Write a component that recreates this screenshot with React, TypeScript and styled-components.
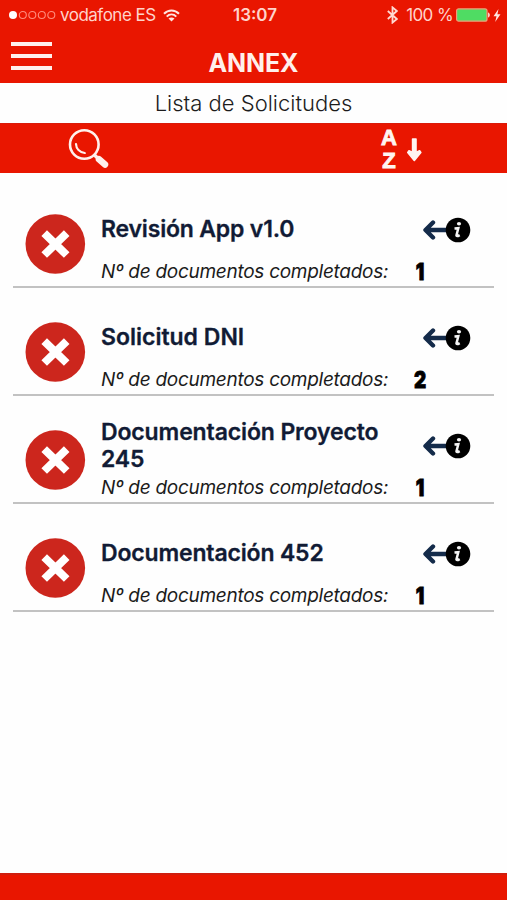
import React from "react";
import styled, { createGlobalStyle } from "styled-components";

const RED = "#e91600";

const GlobalStyle = createGlobalStyle`
  * { box-sizing: border-box; }
  body { margin: 0; background: #fff; }
  svg { display: block; flex: none; }
`;

const Screen = styled.div`
  width: 507px;
  height: 900px;
  display: flex;
  flex-direction: column;
  background: #fefefe;
  font-family: Inter, "Liberation Sans", sans-serif;
  overflow: hidden;
`;

const Header = styled.header`
  height: 83px;
  flex: none;
  background: ${RED};
`;

const StatusBar = styled.div`
  height: 30px;
  display: grid;
  grid-template-columns: 1fr auto 1fr;
  align-items: center;
  padding: 0 6px 0 9px;
  color: #ffd3ca;
`;

const StatusGroup = styled.div<{ $end?: boolean }>`
  display: flex;
  align-items: center;
  justify-content: ${(p) => (p.$end ? "flex-end" : "flex-start")};
`;

const StatusText = styled.span<{ $spacing: number; $bold?: boolean }>`
  font-size: 17px;
  line-height: 30px;
  font-weight: ${(p) => (p.$bold ? 600 : 400)};
  letter-spacing: ${(p) => p.$spacing}px;
  white-space: pre;
`;

const Carrier = styled(StatusText)`
  margin: 0 7px 0 4px;
`;

const Percent = styled(StatusText)`
  margin: 0 3px 0 8px;
`;

const NavBar = styled.div`
  height: 53px;
  display: grid;
  grid-template-columns: 60px 1fr 60px;
`;

const MenuButton = styled.button`
  border: 0;
  padding: 12px 0 0 11px;
  background: none;
  display: flex;
  flex-direction: column;
  gap: 8px;
`;

const MenuBar = styled.span`
  width: 41px;
  height: 4px;
  background: #fff0ec;
`;

const AppTitle = styled.h1`
  margin: 0;
  padding-top: 18px;
  text-align: center;
  font-size: 25px;
  line-height: 31px;
  font-weight: 700;
  letter-spacing: -0.1px;
  color: #fff0ec;
`;

const Subtitle = styled.h2`
  margin: 0;
  height: 40px;
  flex: none;
  line-height: 41px;
  text-align: center;
  font-size: 22px;
  font-weight: 300;
  color: #1c1c1c;
`;

const Toolbar = styled.div`
  height: 50px;
  flex: none;
  display: flex;
  justify-content: space-between;
  padding: 0 85px 0 67px;
  background: ${RED};
  border-top: 1px solid #d91b0a;
`;

const ToolButton = styled.button`
  border: 0;
  padding: 0 0 2px;
  background: none;
  display: flex;
  align-items: center;
  gap: 9px;
`;

const SortLetters = styled.span`
  display: flex;
  flex-direction: column;
  align-items: center;
  width: 18px;
  padding-top: 2px;
  font: 700 22px/23px "Liberation Sans", sans-serif;
  color: #fff4f1;
  -webkit-text-stroke: 0.9px #fff4f1;
`;

const List = styled.main`
  flex: 1;
  padding: 7px 13px 0;
`;

const Row = styled.article`
  height: 108px;
  display: grid;
  grid-template-columns: 88px 1fr 71px;
  border-bottom: 2px solid #c2c2c2;
`;

const RowStatus = styled.div`
  padding: 34px 0 0 12px;
`;

const RowBody = styled.div`
  display: flex;
  flex-direction: column;
`;

const RowTitleBox = styled.div`
  height: 51px;
  margin-top: 24px;
  display: flex;
  align-items: center;
`;

const RowTitle = styled.h3<{ $spacing: number }>`
  margin: 0;
  width: 300px;
  font-size: 23px;
  line-height: 27px;
  font-weight: 600;
  letter-spacing: ${(p) => p.$spacing}px;
  color: #111b35;
  -webkit-text-stroke: 0.3px #111b35;
`;

const RowCaption = styled.p`
  margin: 5px 0 0;
  font-size: 19px;
  line-height: 24px;
  font-style: italic;
  letter-spacing: -0.28px;
  white-space: nowrap;
  color: #1b1b1b;
`;

const RowAside = styled.div`
  padding-top: 37px;
`;

const Count = styled.div`
  margin: 16px 0 0 -12px;
  width: 18px;
  text-align: center;
  font-size: 23px;
  line-height: 26px;
  font-weight: 900;
  color: #000;
  -webkit-text-stroke: 0.8px #000;
  transform: scaleX(0.82);
`;

const Footer = styled.footer`
  height: 27px;
  flex: none;
  background: ${RED};
  border-top: 2px solid #cf1e0e;
`;

const SignalDots = () => (
  <svg width="47" height="10" viewBox="0 0 47 10">
    <circle cx="4" cy="5" r="4" fill="#fff" />
    {[13.8, 23.3, 32.8, 42.3].map((x) => (
      <circle key={x} cx={x} cy="5" r="3.5" fill="none" stroke="#ff8c7c" strokeWidth="1.1" />
    ))}
  </svg>
);

const WifiIcon = () => (
  <svg width="17" height="13" viewBox="0 0 17 13" fill="none" stroke="#ffe5df" strokeWidth="2">
    <path d="M1 4.7C5.2.4 11.8.4 16 4.7M3.7 7.6c2.8-2.7 6.8-2.7 9.6 0" />
    <path d="M8.5 12.5L5.5 9.6c1.7-1.6 4.3-1.6 6 0z" fill="#ffe5df" stroke="none" />
  </svg>
);

const BluetoothIcon = () => (
  <svg width="11" height="18" viewBox="0 0 11 18" fill="none" stroke="#ffd9d1" strokeWidth="1.8">
    <path d="M.8 5l9 8-4.3 3.600V1.400L9.800 5l-9 8" />
  </svg>
);

const BatteryIcon = () => (
  <svg width="37" height="14" viewBox="0 0 37 14">
    <rect x=".6" y=".8" width="30.400" height="12.400" rx="2" fill="#4fdc63" stroke="#f29a78" strokeWidth="1.2" />
    <path d="M32 4.500c2.500.5 2.500 4.500 0 5z" fill="#ffd0c6" />
  </svg>
);

const BoltIcon = () => (
  <svg width="8" height="13" viewBox="0 0 8 13">
    <path d="M5.500 0L.5 7.200h3L2.200 13l5.300-7.700H4.400z" fill="#ffe8e2" />
  </svg>
);

const SearchIcon = () => (
  <svg width="44" height="44" viewBox="0 0 44 44" fill="none" stroke="#fff0ec" strokeLinecap="round">
    <circle cx="17.300" cy="18.500" r="14.300" strokeWidth="2.600" />
    <path d="M9 18c.2 4.700 3.500 8.300 8.800 9" strokeWidth="2.200" />
    <path d="M28 29.500l3 3" strokeWidth="3.500" />
    <path d="M32 33.300l6 5.200" strokeWidth="6.500" />
  </svg>
);

const DownArrowIcon = () => (
  <svg width="15" height="28" viewBox="0 0 15 28" fill="#fff4f1" stroke="#fff4f1" strokeWidth="1.600" strokeLinejoin="round">
    <path d="M5.600 5h3.400v13.500l3.600-1.700 1.200 1.700-6.500 8-6.500-8 1.200-1.700 3.600 1.700z" />
  </svg>
);

const ErrorIcon = () => (
  <svg width="61" height="60" viewBox="0 0 61 60">
    <circle cx="30.300" cy="30" r="29.800" fill="#cc261d" />
    <path d="M19.200 19.200l22.500 21.800M41.700 19.200l-22.500 21.800" stroke="#fff" strokeWidth="8" />
  </svg>
);

const InfoIcon = () => (
  <svg width="48" height="26" viewBox="0 0 48 26" fill="none">
    <path d="M27 13H3M10 5.500L2.500 13l7.500 7.500" stroke="#142b4a" strokeWidth="4.400" strokeLinecap="round" strokeLinejoin="round" />
    <circle cx="35" cy="13" r="12.300" fill="#000" />
    <ellipse cx="36" cy="6.800" rx="2.100" ry="1.700" fill="#f4f4f4" />
    <path d="M31.500 11.500l3.800-.3-1.800 6.900q-.2 2 3.200 0" stroke="#f4f4f4" strokeWidth="2.500" />
  </svg>
);

const requests = [
  { title: "Revisión App v1.0", count: 1, spacing: -0.18 },
  { title: "Solicitud DNI", count: 2, spacing: 0 },
  { title: "Documentación Proyecto 245", count: 1, spacing: -0.13 },
  { title: "Documentación 452", count: 1, spacing: -0.16 },
];

export default function App() {
  return (
    <Screen>
      <GlobalStyle />
      <Header>
        <StatusBar>
          <StatusGroup>
            <SignalDots />
            <Carrier $spacing={-0.5}>vodafone ES</Carrier>
            <WifiIcon />
          </StatusGroup>
          <StatusText $spacing={0} $bold>13:07</StatusText>
          <StatusGroup $end>
            <BluetoothIcon />
            <Percent $spacing={-0.6}>100 %</Percent>
            <BatteryIcon />
            <BoltIcon />
          </StatusGroup>
        </StatusBar>
        <NavBar>
          <MenuButton aria-label="Menú">
            <MenuBar />
            <MenuBar />
            <MenuBar />
          </MenuButton>
          <AppTitle>ANNEX</AppTitle>
        </NavBar>
      </Header>
      <Subtitle>Lista de Solicitudes</Subtitle>
      <Toolbar>
        <ToolButton aria-label="Buscar">
          <SearchIcon />
        </ToolButton>
        <ToolButton aria-label="Ordenar">
          <SortLetters>
            <span>A</span>
            <span>Z</span>
          </SortLetters>
          <DownArrowIcon />
        </ToolButton>
      </Toolbar>
      <List>
        {requests.map((r) => (
          <Row key={r.title}>
            <RowStatus>
              <ErrorIcon />
            </RowStatus>
            <RowBody>
              <RowTitleBox>
                <RowTitle $spacing={r.spacing}>{r.title}</RowTitle>
              </RowTitleBox>
              <RowCaption>Nº de documentos completados:</RowCaption>
            </RowBody>
            <RowAside>
              <InfoIcon />
              <Count>{r.count}</Count>
            </RowAside>
          </Row>
        ))}
      </List>
      <Footer />
    </Screen>
  );
}
